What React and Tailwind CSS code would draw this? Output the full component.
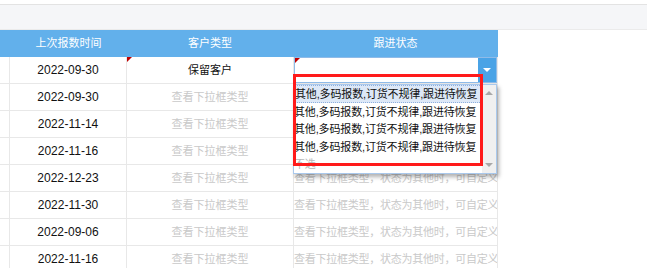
const dates = [
  '2022-09-30',
  '2022-09-30',
  '2022-11-14',
  '2022-11-16',
  '2022-12-23',
  '2022-11-30',
  '2022-09-06',
  '2022-11-16',
];

const option = '其他,多码报数,订货不规律,跟进待恢复';

const Corner = () => (
  <span className="absolute left-0 top-0 w-0 h-0 border-t-[5px] border-r-[5px] border-t-[#c00000] border-r-transparent" />
);

export default function App() {
  return (
    <div
      className="relative w-[647px] h-[268px] overflow-hidden bg-white"
      style={{ fontFamily: '"Liberation Sans", "Noto Sans CJK SC", sans-serif' }}
    >
      <div className="h-[5px] border-b border-[#e3e3e3]" />
      <div className="h-[25px] bg-[#f5f6f8] border-b border-[#ebebeb]" />

      <div className="w-[498px]">
        <div className="flex h-[27px] bg-[#62b0eb] text-white text-[11px] leading-[27px]">
          <div className="w-[10px]" />
          <div className="w-[117px] text-center">上次报数时间</div>
          <div className="w-[166px] text-center">客户类型</div>
          <div className="w-[205px] text-center">跟进状态</div>
        </div>

        {dates.map((d, i) => (
          <Row key={i} date={d} first={i === 0} />
        ))}
      </div>

      {/* dropdown list */}
      <div className="absolute left-[293px] top-[84px] w-[204px] h-[90px] flex bg-white border border-[#a9c8ec] shadow-[2px_3px_4px_rgba(0,0,0,0.3)]">
        <div className="flex-1 flex flex-col text-[11px] tracking-[-0.15px] text-[#111]">
          <div className="h-[18px] leading-[16px] bg-[#dde8f7] border border-dotted border-[#8fb0de] whitespace-nowrap overflow-hidden">
            {option}
          </div>
          <div className="h-[18px] leading-[18px] whitespace-nowrap overflow-hidden">{option}</div>
          <div className="h-[18px] leading-[18px] whitespace-nowrap overflow-hidden">{option}</div>
          <div className="h-[18px] leading-[18px] whitespace-nowrap overflow-hidden">{option}</div>
          <div className="h-[18px] leading-[18px] text-[#b8b8b8]">不选</div>
        </div>
        <div className="w-[14px] bg-[#f0f0f0] flex flex-col justify-between items-center py-[6px]">
          <span className="w-0 h-0 border-x-[4px] border-x-transparent border-b-[4px] border-b-[#a8a8a8]" />
          <span className="w-0 h-0 border-x-[4px] border-x-transparent border-t-[4px] border-t-[#a8a8a8]" />
        </div>
      </div>

      {/* red annotation box */}
      <div className="absolute left-[293px] top-[74px] w-[190px] h-[92px] border-[3px] border-[#ff1a1a]" />
    </div>
  );
}

const Row = ({ date, first }) => {
  return (
    <div className="flex h-[27px] border-b border-[#e8e8e8] text-[11px] leading-[26px]">
      <div className="w-[10px] border-r border-[#e8e8e8]" />
      <div className="w-[117px] border-r border-[#e8e8e8] text-center text-[12px] text-[#111]">
        {date}
      </div>
      <div className="relative w-[166px] text-center">
        {first ? (
          <>
            <Corner />
            <span className="text-[#111]">保留客户</span>
          </>
        ) : (
          <span className="text-[#c9c9c9]">查看下拉框类型</span>
        )}
      </div>
      <div className="relative w-[205px] border-x border-[#e8e8e8] overflow-hidden whitespace-nowrap">
        {first ? (
          <div className="absolute inset-0 flex border border-[#8fbbe8] bg-white">
            <Corner />
            <div className="flex-1" />
            <div className="w-[18px] bg-[#4aa3e6] flex items-center justify-center">
              <span className="w-0 h-0 border-x-[4px] border-x-transparent border-t-[4px] border-t-white" />
            </div>
          </div>
        ) : (
          <span className="text-[#c9c9c9] tracking-[-0.25px]">查看下拉框类型，状态为其他时，可自定义</span>
        )}
      </div>
    </div>
  );
};
